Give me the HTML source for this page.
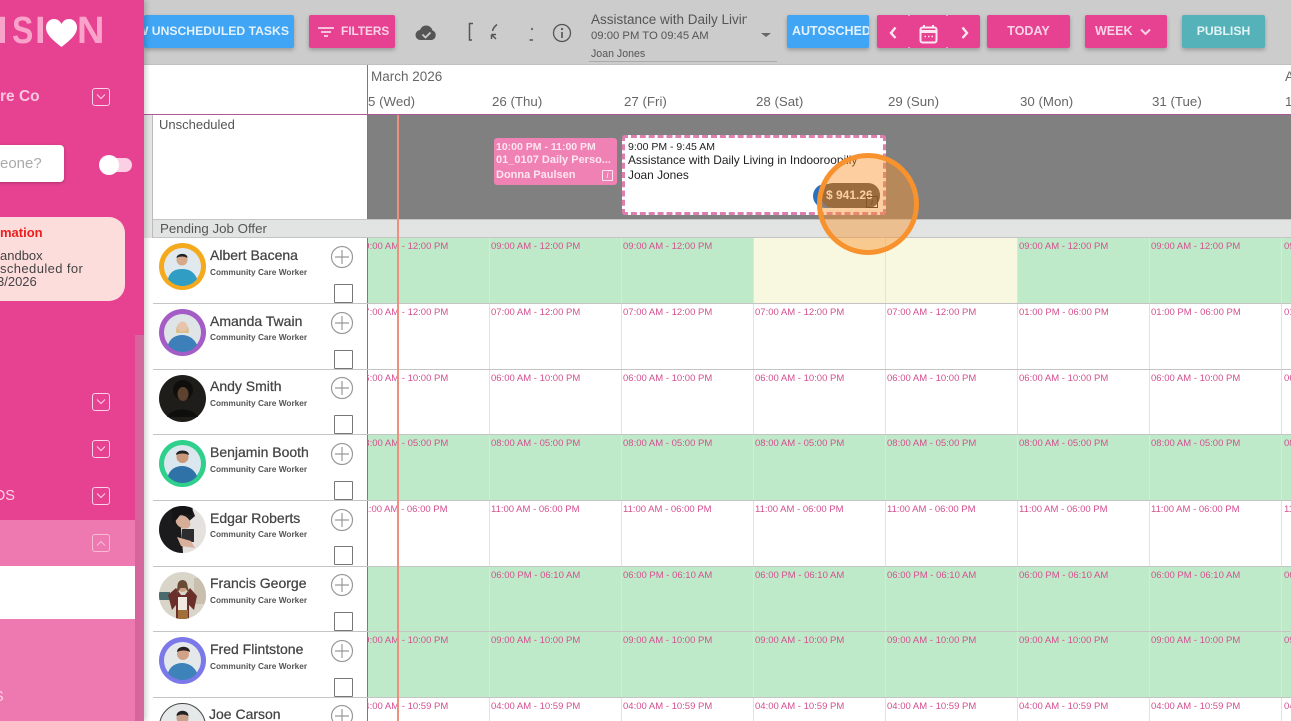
<!DOCTYPE html>
<html><head><meta charset="utf-8"><style>
*{box-sizing:border-box}
html,body{margin:0;padding:0;width:1291px;height:721px;overflow:hidden;background:#fff;font-family:"Liberation Sans",sans-serif;color:#555}
#root{position:relative;width:1291px;height:721px;overflow:hidden;background:#fff}
.a{position:absolute}
.t{position:absolute;white-space:nowrap}
.btn{position:absolute;top:15px;height:33px;background:#e64291;color:#fbd3e6;font-size:12.5px;font-weight:bold;line-height:32px;text-align:center;border-radius:2px;box-shadow:0 2px 4px rgba(0,0,0,.25);white-space:nowrap;overflow:hidden}
.h{position:absolute;top:94px;font-size:13.3px;color:#666;white-space:nowrap}
.m{position:absolute;font-size:9.5px;color:#d3508f;white-space:nowrap;line-height:11px}
.ln{position:absolute;left:153px;width:1138px;height:1px;background:#c4c4c4}
.v{position:absolute;top:238px;width:1px;height:483px;background:#e2e2e2}
.nm{position:absolute;left:210px;font-size:14px;color:#444;white-space:nowrap;-webkit-text-stroke:.25px #444}
.rl{position:absolute;left:210px;font-size:8.3px;font-weight:bold;color:#555;white-space:nowrap}
.cb{position:absolute;left:334px;width:19px;height:19px;border:1px solid #777;border-radius:1px;background:#fff}
.ch{position:absolute;left:92px;width:18px;height:18px;border:1px solid #fbd3e6;border-radius:3px}
.av{position:absolute;left:159px}
.lg{position:absolute;top:10px;font-size:38px;font-weight:bold;color:#f9a3cb;transform-origin:0 0;white-space:nowrap}
.dot{position:absolute;width:2px;height:1px;background:#f0a5c8}
</style></head><body><div id="root">

<!-- top bar -->
<div class="a" style="left:0;top:0;width:1291px;height:65px;background:#ccc;border-bottom:1px solid #c0c0c0"></div>
<div class="btn" style="left:144px;width:150px;background:#3fa5f4;color:#e3f2fd;font-size:12.2px"><span class="t" style="right:5px;top:0">W UNSCHEDULED TASKS</span></div>
<div class="btn" style="left:309px;width:86px;text-align:left;padding-left:32px;font-size:11.8px">FILTERS
<svg class="a" style="left:9px;top:11px" width="17" height="12" viewBox="0 0 17 12"><path d="M0 2H16M3 6H13M6 10H10" stroke="#fbd3e6" stroke-width="1.700"/></svg></div>
<svg class="a" style="left:415px;top:24px" width="23" height="18" viewBox="0 0 23 18"><path d="M6 16a5 5 0 0 1-1-10 6.500 6.500 0 0 1 12.500 0.500A5 5 0 0 1 17 16z" fill="#555"/><path d="M7.500 10.500l3 3 5-5" stroke="#ccc" stroke-width="1.800" fill="none"/></svg>
<svg class="a" style="left:467px;top:22px" width="8" height="20" viewBox="0 0 8 20"><path d="M6 1.500H2.500V18H5" stroke="#555" stroke-width="1.500" fill="none"/></svg>
<svg class="a" style="left:488px;top:22px" width="14" height="20" viewBox="0 0 14 20"><path d="M9 2.500C6.500 4.500 5 6.500 4.500 9" stroke="#555" stroke-width="1.500" fill="none"/><path d="M3.500 12.500V17M3.500 12.500H8M3.500 12.500L8 17" stroke="#555" stroke-width="1.500" fill="none"/></svg>
<svg class="a" style="left:526px;top:26px" width="8" height="16" viewBox="0 0 8 16"><path d="M5.500 2l1 2M3.500 14H7" stroke="#555" stroke-width="1.500" fill="none"/></svg>
<svg class="a" style="left:552px;top:23px" width="20" height="20" viewBox="0 0 20 20"><circle cx="10" cy="10" r="8.500" fill="none" stroke="#555" stroke-width="1.300"/><path d="M10 9v6" stroke="#555" stroke-width="1.600"/><circle cx="10" cy="6" r="1.100" fill="#555"/></svg>
<div class="a" style="left:591px;top:10px;width:156px;height:20px;overflow:hidden;font-size:13.500px;color:#555;white-space:nowrap;line-height:19px">Assistance with Daily Living in Indooroopilly</div>
<div class="t" style="left:591px;top:30px;font-size:11.300px;color:#555">09:00 PM TO 09:45 AM</div>
<div class="t" style="left:591px;top:48px;font-size:10.600px;color:#555">Joan Jones</div>
<div class="a" style="left:589px;top:61px;width:188px;height:1px;background:#aaa"></div>
<div class="a" style="left:761px;top:33px;width:0;height:0;border:5px solid transparent;border-top:4px solid #666;border-bottom:0"></div>
<div class="btn" style="left:787px;width:82px;background:#3fa5f4;color:#e3f2fd;text-align:left;padding-left:5px">AUTOSCHED</div>
<div class="btn" style="left:877px;width:103px">
<svg class="a" style="left:11px;top:10px" width="10" height="15" viewBox="0 0 10 15"><path d="M7.500 2.500L3 8l4.500 5" stroke="#fde8f2" stroke-width="2.400" fill="none"/></svg>
<svg class="a" style="left:42px;top:9px" width="19" height="20" viewBox="0 0 19 20"><rect x="1.500" y="3.500" width="16" height="15" rx="2" fill="none" stroke="#fde8f2" stroke-width="2"/><path d="M1.500 7.500H17.500" stroke="#fde8f2" stroke-width="3"/><path d="M5 1v3M14 1v3" stroke="#fde8f2" stroke-width="2"/><path d="M5.500 12.500h1.500M9 12.500h1.500M12.500 12.500h1.500" stroke="#fde8f2" stroke-width="1.500"/></svg>
<svg class="a" style="left:83px;top:10px" width="10" height="15" viewBox="0 0 10 15"><path d="M2.500 2.500L7 8l-4.500 5" stroke="#fde8f2" stroke-width="2.400" fill="none"/></svg>
<div class="dot" style="left:31px;top:0"></div><div class="dot" style="left:69px;top:0"></div><div class="dot" style="left:31px;bottom:0"></div><div class="dot" style="left:69px;bottom:0"></div>
</div>
<div class="btn" style="left:987px;width:83px">TODAY</div>
<div class="btn" style="left:1085px;width:82px;text-align:left;padding-left:10px">WEEK
<svg class="a" style="left:54px;top:12px" width="13" height="10" viewBox="0 0 13 10"><path d="M2 2.500l4.500 4.500 4.500-4.500" stroke="#fbd3e6" stroke-width="2" fill="none"/></svg></div>
<div class="btn" style="left:1182px;width:83px;background:#55b2b8;color:#e2f4f5;font-size:12.200px">PUBLISH</div>

<!-- calendar header -->
<div class="a" style="left:367px;top:65px;width:1px;height:656px;background:#b4579a"></div>
<div class="t" style="left:371px;top:69px;font-size:13.500px;color:#666">March 2026</div>
<div class="t" style="left:1285px;top:69px;font-size:13.500px;color:#666">A</div>
<div class="h" style="left:368px">5 (Wed)</div>
<div class="h" style="left:492px">26 (Thu)</div>
<div class="h" style="left:624px">27 (Fri)</div>
<div class="h" style="left:756px">28 (Sat)</div>
<div class="h" style="left:888px">29 (Sun)</div>
<div class="h" style="left:1020px">30 (Mon)</div>
<div class="h" style="left:1152px">31 (Tue)</div>
<div class="h" style="left:1285px">1</div>
<div class="a" style="left:144px;top:114px;width:1147px;height:1px;background:#b4579a"></div>

<!-- unscheduled -->
<div class="a" style="left:144px;top:115px;width:9px;height:123px;background:#e4e4e4;border-right:1px solid #bbb"></div>
<div class="t" style="left:159px;top:117px;font-size:13px;color:#555">Unscheduled</div>
<div class="a" style="left:368px;top:115px;width:923px;height:104px;background:#808080"></div>
<div class="a" style="left:153px;top:219px;width:1138px;height:19px;background:#e2e4e4;border-top:1px solid #c4c4c4;border-bottom:1px solid #c4c4c4"></div>
<div class="t" style="left:160px;top:221px;font-size:13.300px;color:#555">Pending Job Offer</div>

<!-- grid rows -->
<div class="a" style="left:368px;top:238px;width:386px;height:66px;background:#bfeaca"></div>
<div class="a" style="left:754px;top:238px;width:264px;height:66px;background:#f8f8e0"></div>
<div class="a" style="left:1018px;top:238px;width:273px;height:66px;background:#bfeaca"></div>
<div class="a" style="left:368px;top:435px;width:923px;height:66px;background:#bfeaca"></div>
<div class="a" style="left:368px;top:566px;width:923px;height:132px;background:#bfeaca"></div>
<div class="v" style="left:489px"></div><div class="v" style="left:621px"></div><div class="v" style="left:753px"></div><div class="v" style="left:885px"></div><div class="v" style="left:1017px"></div><div class="v" style="left:1149px"></div><div class="v" style="left:1281px"></div>
<div class="ln" style="top:303px"></div><div class="ln" style="top:369px"></div><div class="ln" style="top:434px"></div><div class="ln" style="top:500px"></div><div class="ln" style="top:566px"></div><div class="ln" style="top:631px"></div><div class="ln" style="top:697px"></div>

<!-- times -->
<div class="a" style="left:368px;top:238px;width:923px;height:483px;overflow:hidden">
<div class="m" style="left:-9px;top:3px">09:00 AM - 12:00 PM</div><div class="m" style="left:123px;top:3px">09:00 AM - 12:00 PM</div><div class="m" style="left:255px;top:3px">09:00 AM - 12:00 PM</div><div class="m" style="left:651px;top:3px">09:00 AM - 12:00 PM</div><div class="m" style="left:783px;top:3px">09:00 AM - 12:00 PM</div><div class="m" style="left:916px;top:3px">09:00 AM</div>
<div class="m" style="left:-9px;top:69px">07:00 AM - 12:00 PM</div><div class="m" style="left:123px;top:69px">07:00 AM - 12:00 PM</div><div class="m" style="left:255px;top:69px">07:00 AM - 12:00 PM</div><div class="m" style="left:387px;top:69px">07:00 AM - 12:00 PM</div><div class="m" style="left:519px;top:69px">07:00 AM - 12:00 PM</div><div class="m" style="left:651px;top:69px">01:00 PM - 06:00 PM</div><div class="m" style="left:783px;top:69px">01:00 PM - 06:00 PM</div><div class="m" style="left:916px;top:69px">01:00 PM</div>
<div class="m" style="left:-9px;top:135px">06:00 AM - 10:00 PM</div><div class="m" style="left:123px;top:135px">06:00 AM - 10:00 PM</div><div class="m" style="left:255px;top:135px">06:00 AM - 10:00 PM</div><div class="m" style="left:387px;top:135px">06:00 AM - 10:00 PM</div><div class="m" style="left:519px;top:135px">06:00 AM - 10:00 PM</div><div class="m" style="left:651px;top:135px">06:00 AM - 10:00 PM</div><div class="m" style="left:783px;top:135px">06:00 AM - 10:00 PM</div><div class="m" style="left:916px;top:135px">06:00 AM</div>
<div class="m" style="left:-9px;top:200px">08:00 AM - 05:00 PM</div><div class="m" style="left:123px;top:200px">08:00 AM - 05:00 PM</div><div class="m" style="left:255px;top:200px">08:00 AM - 05:00 PM</div><div class="m" style="left:387px;top:200px">08:00 AM - 05:00 PM</div><div class="m" style="left:519px;top:200px">08:00 AM - 05:00 PM</div><div class="m" style="left:651px;top:200px">08:00 AM - 05:00 PM</div><div class="m" style="left:783px;top:200px">08:00 AM - 05:00 PM</div><div class="m" style="left:916px;top:200px">08:00 AM</div>
<div class="m" style="left:-9px;top:266px">11:00 AM - 06:00 PM</div><div class="m" style="left:123px;top:266px">11:00 AM - 06:00 PM</div><div class="m" style="left:255px;top:266px">11:00 AM - 06:00 PM</div><div class="m" style="left:387px;top:266px">11:00 AM - 06:00 PM</div><div class="m" style="left:519px;top:266px">11:00 AM - 06:00 PM</div><div class="m" style="left:651px;top:266px">11:00 AM - 06:00 PM</div><div class="m" style="left:783px;top:266px">11:00 AM - 06:00 PM</div><div class="m" style="left:916px;top:266px">11:00 AM</div>
<div class="m" style="left:123px;top:332px">06:00 PM - 06:10 AM</div><div class="m" style="left:255px;top:332px">06:00 PM - 06:10 AM</div><div class="m" style="left:387px;top:332px">06:00 PM - 06:10 AM</div><div class="m" style="left:519px;top:332px">06:00 PM - 06:10 AM</div><div class="m" style="left:651px;top:332px">06:00 PM - 06:10 AM</div><div class="m" style="left:783px;top:332px">06:00 PM - 06:10 AM</div><div class="m" style="left:916px;top:332px">06:00 PM</div>
<div class="m" style="left:-9px;top:397px">09:00 AM - 10:00 PM</div><div class="m" style="left:123px;top:397px">09:00 AM - 10:00 PM</div><div class="m" style="left:255px;top:397px">09:00 AM - 10:00 PM</div><div class="m" style="left:387px;top:397px">09:00 AM - 10:00 PM</div><div class="m" style="left:519px;top:397px">09:00 AM - 10:00 PM</div><div class="m" style="left:651px;top:397px">09:00 AM - 10:00 PM</div><div class="m" style="left:783px;top:397px">09:00 AM - 10:00 PM</div><div class="m" style="left:916px;top:397px">09:00 AM</div>
<div class="m" style="left:-9px;top:463px">04:00 AM - 10:59 PM</div><div class="m" style="left:123px;top:463px">04:00 AM - 10:59 PM</div><div class="m" style="left:255px;top:463px">04:00 AM - 10:59 PM</div><div class="m" style="left:387px;top:463px">04:00 AM - 10:59 PM</div><div class="m" style="left:519px;top:463px">04:00 AM - 10:59 PM</div><div class="m" style="left:651px;top:463px">04:00 AM - 10:59 PM</div><div class="m" style="left:783px;top:463px">04:00 AM - 10:59 PM</div><div class="m" style="left:916px;top:463px">04:00 AM</div>
</div>

<!-- now line -->
<div class="a" style="left:397px;top:115px;width:2px;height:606px;background:#ef8f80"></div>

<!-- tasks -->
<div class="a" style="left:494px;top:138px;width:123px;height:47px;background:#f081b5;border-radius:3px;color:#fde6f0;font-weight:bold;white-space:nowrap">
<div class="t" style="left:2px;top:3px;font-size:10.500px">10:00 PM - 11:00 PM</div>
<div class="t" style="left:2px;top:16px;font-size:11px">01_0107 Daily Perso...</div>
<div class="t" style="left:2px;top:31px;font-size:11px">Donna Paulsen</div>
<div class="a" style="left:108px;top:32px;width:11px;height:11px;border:1px solid #fde6f0;border-radius:1px;font-size:9px;line-height:9px;text-align:center;font-style:italic;font-weight:normal">i</div>
</div>
<div class="a" style="left:622px;top:135px;width:264px;height:80px;background:#fff;border:3px dashed #dd7fae;border-radius:3px;color:#222">
<div class="t" style="left:3px;top:3px;font-size:10.500px">9:00 PM - 9:45 AM</div>
<div class="t" style="left:3px;top:15px;font-size:11.900px">Assistance with Daily Living in Indooroopilly</div>
<div class="t" style="left:3px;top:30px;font-size:11.900px">Joan Jones</div>
<div class="a" style="left:188px;top:46px;width:28px;height:24px;border-radius:12px;background:#2a72c0"></div>
<div class="a" style="left:196px;top:45px;width:59px;height:25px;border-radius:12px;background:#4d4d4d;color:#fff;font-size:12px;font-weight:bold;line-height:24px;padding-left:5px;white-space:nowrap;overflow:hidden">$ 941.26</div>
<div class="a" style="left:241px;top:58px;width:12px;height:12px;border:1px solid #222;font-size:9px;line-height:10px;text-align:center;font-style:italic">i</div>
</div>

<!-- highlight -->
<div class="a" style="left:817px;top:153px;width:102px;height:102px;border-radius:50%;background:rgba(248,146,45,.45);border:5px solid #f7922e"></div>

<!-- Albert -->
<svg class="av" style="top:243px" width="47" height="47" viewBox="0 0 47 47"><circle cx="23.500" cy="23.500" r="23.500" fill="#f5a91c"/><circle cx="23.500" cy="23.500" r="18.500" fill="#e0e9ee"/><path d="M9 36c2-8 8-10 14-10s12 2 15 10a18.500 18.500 0 0 1-29 0z" fill="#2f9dc4"/><circle cx="23" cy="17" r="5.500" fill="#d6a98a"/><path d="M17.500 15c0-5 11-6 11 0-3-2-8-2-11 0z" fill="#1e2226"/></svg>
<!-- Amanda -->
<svg class="av" style="top:309px" width="47" height="47" viewBox="0 0 47 47"><circle cx="23.500" cy="23.500" r="23.500" fill="#a45cc7"/><circle cx="23.500" cy="23.500" r="18.500" fill="#dfe4e6"/><path d="M9 36c2-7 8-10 14-10s12 3 15 10a18.500 18.500 0 0 1-29 0z" fill="#3d7fb8"/><path d="M17 24c-1-14 13-14 13 0z" fill="#d9c08e"/><circle cx="23.500" cy="17.500" r="5" fill="#e8c4ac"/></svg>
<!-- Andy -->
<svg class="av" style="top:375px" width="47" height="47" viewBox="0 0 47 47"><circle cx="23.500" cy="23.500" r="23.500" fill="#1e1d19"/><circle cx="24" cy="15" r="10" fill="#0f0e0c"/><ellipse cx="24" cy="19" rx="5.500" ry="7" fill="#5d4230"/><path d="M8 42c4-10 26-10 31 0z" fill="#0e0e0c"/></svg>
<!-- Benjamin -->
<svg class="av" style="top:440px" width="47" height="47" viewBox="0 0 47 47"><circle cx="23.500" cy="23.500" r="23.500" fill="#2fcf8c"/><circle cx="23.500" cy="23.500" r="18.500" fill="#dbe7ee"/><path d="M9 36c2-7 8-10 14-10s12 3 15 10a18.500 18.500 0 0 1-29 0z" fill="#2f72a8"/><circle cx="23.500" cy="17" r="6" fill="#c99878"/><path d="M17 15c0-6 13-6 13 0-4-2-9-2-13 0z" fill="#222"/></svg>
<!-- Edgar -->
<svg class="av" style="top:506px" width="47" height="47" viewBox="0 0 47 47"><clipPath id="e"><circle cx="23.500" cy="23.500" r="23.500"/></clipPath><g clip-path="url(#e)"><rect width="47" height="47" fill="#e4e1de"/><path d="M0 0H32L36 10 22 22 24 47H0z" fill="#1b1a1c"/><ellipse cx="24" cy="16" rx="8" ry="6" fill="#d6ad96" transform="rotate(35 24 16)"/><path d="M12 0H34L33 9 22 8 14 18z" fill="#141316"/><rect x="23" y="23" width="12" height="13" fill="#2d2c2e"/><path d="M18 31l14 4 4 7-14-2z" fill="#d8b09c"/></g></svg>
<!-- Francis -->
<svg class="av" style="top:572px" width="47" height="47" viewBox="0 0 47 47"><clipPath id="f"><circle cx="23.500" cy="23.500" r="23.500"/></clipPath><g clip-path="url(#f)"><rect width="47" height="47" fill="#d9d5c9"/><rect x="0" y="20" width="11" height="8" fill="#4b6a6e"/><rect x="35" y="6" width="12" height="26" fill="#c8bfae"/><path d="M9 23l8-7 5 7h4l5-7 7 8-3 14-5-5v14H17V33l-4 5z" fill="#6b2f2b"/><rect x="19" y="25" width="9" height="13" fill="#efe9e1"/><circle cx="23.500" cy="15" r="5" fill="#c9a283"/><path d="M18.500 14c0-8 10-8 10 0l2 8-4-6h-5l-4 6z" fill="#6a4a35"/><path d="M19 38h10v9H19z" fill="#a06f3a"/></g></svg>
<!-- Fred -->
<svg class="av" style="top:637px" width="47" height="47" viewBox="0 0 47 47"><circle cx="23.500" cy="23.500" r="23.500" fill="#7b78ea"/><circle cx="23.500" cy="23.500" r="18.500" fill="#e4e8ea"/><path d="M9 36c2-7 8-10 14-10s12 3 15 10a18.500 18.500 0 0 1-29 0z" fill="#3d82b8"/><circle cx="24" cy="17" r="6" fill="#d2a288"/><path d="M18 15c0-7 13-7 13 0-4-2-9-2-13 0z" fill="#2a2120"/></svg>
<!-- Joe -->
<svg class="av" style="top:703px" width="47" height="47" viewBox="0 0 47 47"><circle cx="23.500" cy="23.500" r="23" fill="#e6e9ea" stroke="#444" stroke-width="1"/><circle cx="23.500" cy="15" r="6" fill="#c9a08a"/><path d="M17.500 13c0-7 12-7 12 0-4-2-8-2-12 0z" fill="#222"/></svg>

<div class="nm" style="top:247px">Albert Bacena</div><div class="rl" style="top:267px">Community Care Worker</div>
<div class="nm" style="top:313px">Amanda Twain</div><div class="rl" style="top:332px">Community Care Worker</div>
<div class="nm" style="top:378px">Andy Smith</div><div class="rl" style="top:398px">Community Care Worker</div>
<div class="nm" style="top:444px">Benjamin Booth</div><div class="rl" style="top:464px">Community Care Worker</div>
<div class="nm" style="top:510px">Edgar Roberts</div><div class="rl" style="top:529px">Community Care Worker</div>
<div class="nm" style="top:575px">Francis George</div><div class="rl" style="top:595px">Community Care Worker</div>
<div class="nm" style="top:641px">Fred Flintstone</div><div class="rl" style="top:661px">Community Care Worker</div>
<div class="nm" style="top:706px;left:209px">Joe Carson</div>

<svg class="a" style="left:330px;top:245px" width="24" height="24" viewBox="0 0 24 24"><circle cx="12" cy="12" r="10.500" fill="none" stroke="#999" stroke-width="1.200"/><path d="M12 5v14M5 12h14" stroke="#999" stroke-width="1.200"/></svg>
<svg class="a" style="left:330px;top:311px" width="24" height="24" viewBox="0 0 24 24"><circle cx="12" cy="12" r="10.500" fill="none" stroke="#999" stroke-width="1.200"/><path d="M12 5v14M5 12h14" stroke="#999" stroke-width="1.200"/></svg>
<svg class="a" style="left:330px;top:376px" width="24" height="24" viewBox="0 0 24 24"><circle cx="12" cy="12" r="10.500" fill="none" stroke="#999" stroke-width="1.200"/><path d="M12 5v14M5 12h14" stroke="#999" stroke-width="1.200"/></svg>
<svg class="a" style="left:330px;top:442px" width="24" height="24" viewBox="0 0 24 24"><circle cx="12" cy="12" r="10.500" fill="none" stroke="#999" stroke-width="1.200"/><path d="M12 5v14M5 12h14" stroke="#999" stroke-width="1.200"/></svg>
<svg class="a" style="left:330px;top:508px" width="24" height="24" viewBox="0 0 24 24"><circle cx="12" cy="12" r="10.500" fill="none" stroke="#999" stroke-width="1.200"/><path d="M12 5v14M5 12h14" stroke="#999" stroke-width="1.200"/></svg>
<svg class="a" style="left:330px;top:573px" width="24" height="24" viewBox="0 0 24 24"><circle cx="12" cy="12" r="10.500" fill="none" stroke="#999" stroke-width="1.200"/><path d="M12 5v14M5 12h14" stroke="#999" stroke-width="1.200"/></svg>
<svg class="a" style="left:330px;top:639px" width="24" height="24" viewBox="0 0 24 24"><circle cx="12" cy="12" r="10.500" fill="none" stroke="#999" stroke-width="1.200"/><path d="M12 5v14M5 12h14" stroke="#999" stroke-width="1.200"/></svg>
<svg class="a" style="left:330px;top:704px" width="24" height="24" viewBox="0 0 24 24"><circle cx="12" cy="12" r="10.500" fill="none" stroke="#999" stroke-width="1.200"/><path d="M12 5v14M5 12h14" stroke="#999" stroke-width="1.200"/></svg>

<div class="cb" style="top:284px"></div><div class="cb" style="top:350px"></div><div class="cb" style="top:415px"></div><div class="cb" style="top:481px"></div><div class="cb" style="top:546px"></div><div class="cb" style="top:612px"></div><div class="cb" style="top:678px"></div>

<!-- sidebar -->
<div class="a" style="left:0;top:0;width:144px;height:721px;background:#e64291;box-shadow:2px 0 5px rgba(0,0,0,.2)"></div>
<div class="a" style="left:135px;top:335px;width:9px;height:386px;background:linear-gradient(90deg,#dc5f9c,#cf6ea0)"></div>
<div class="a" style="left:0;top:520px;width:135px;height:46px;background:#ee79b1"></div>
<div class="a" style="left:0;top:566px;width:135px;height:53px;background:#fff"></div>
<div class="a" style="left:0;top:619px;width:135px;height:102px;background:#ee79b1"></div>

<div class="lg" style="left:-3px">I</div>
<div class="lg" style="left:12px;transform:scaleX(.84)">S</div>
<div class="lg" style="left:35px">I</div>
<svg class="a" style="left:45px;top:18px" width="33" height="30" viewBox="0 0 33 30"><path d="M16.500 29C9 23 1 17 1 9.500 1 4 5 1 9 1c3.500 0 6 2 7.500 5C18 3 20.500 1 24 1c4 0 8 3 8 8.500C32 17 24 23 16.500 29z" fill="#fff"/></svg>
<div class="lg" style="left:77px">N</div>

<div class="t" style="left:0;top:88px;font-size:15.500px;font-weight:bold;color:#fbc7df">re Co</div>
<div class="ch" style="top:88px"><svg class="a" style="left:3px;top:4px" width="10" height="8" viewBox="0 0 10 8"><path d="M1 1.500l4 4 4-4" stroke="#fbd3e6" fill="none"/></svg></div>

<div class="a" style="left:-20px;top:145px;width:84px;height:37px;background:#fff;border-radius:4px;box-shadow:0 1px 3px rgba(0,0,0,.25)"></div>
<div class="t" style="left:0;top:155px;font-size:15px;color:#aaa">eone?</div>
<div class="a" style="left:110px;top:158px;width:22px;height:14px;background:#fbd0e4;border-radius:7px"></div>
<div class="a" style="left:99px;top:155px;width:20px;height:20px;background:#fff;border-radius:50%"></div>

<div class="a" style="left:-30px;top:217px;width:155px;height:84px;background:#fddcdc;border-radius:16px"></div>
<div class="t" style="left:0;top:225px;font-size:13px;font-weight:bold;color:#ee1d1d">mation</div>
<div class="t" style="left:0;top:249px;font-size:13px;color:#444;line-height:13px">andbox</div>
<div class="t" style="left:0;top:262px;font-size:13px;color:#444;line-height:13px;letter-spacing:.4px">scheduled for</div>
<div class="t" style="left:-3px;top:275px;font-size:13px;color:#444;line-height:13px">3/2026</div>

<div class="ch" style="top:393px"><svg class="a" style="left:3px;top:4px" width="10" height="8" viewBox="0 0 10 8"><path d="M1 1.500l4 4 4-4" stroke="#fbd3e6" fill="none"/></svg></div>
<div class="ch" style="top:440px"><svg class="a" style="left:3px;top:4px" width="10" height="8" viewBox="0 0 10 8"><path d="M1 1.500l4 4 4-4" stroke="#fbd3e6" fill="none"/></svg></div>
<div class="t" style="left:-6px;top:488px;font-size:14.500px;color:#fbd3e6">OS</div>
<div class="ch" style="top:487px"><svg class="a" style="left:3px;top:4px" width="10" height="8" viewBox="0 0 10 8"><path d="M1 1.500l4 4 4-4" stroke="#fbd3e6" fill="none"/></svg></div>
<div class="ch" style="top:534px;opacity:.75"><svg class="a" style="left:3px;top:4px" width="10" height="8" viewBox="0 0 10 8"><path d="M1 6.500l4-4 4 4" stroke="#fbd3e6" fill="none"/></svg></div>
<div class="t" style="left:-6px;top:689px;font-size:14.500px;color:#fbd3e6">S</div>

</div></body></html>
